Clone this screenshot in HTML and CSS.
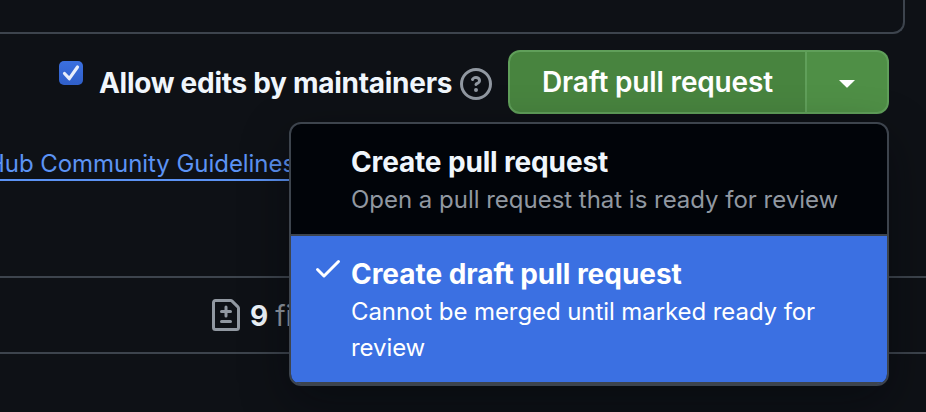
FILE: index.html
```html
<!DOCTYPE html>
<html lang="en">
<head>
<meta charset="utf-8">
<title>Draft pull request</title>
<link rel="stylesheet" href="styles.css">
</head>
<body>
<main class="page">
  <div class="editor"></div>
  <div class="actions">
    <label class="allow">
      <span class="checkbox">
        <svg width="24" height="24" viewBox="0 0 24 24"><path d="M5.5 12.5 10.3 17.7 18.5 6" fill="none" stroke="#e8eefb" stroke-width="3.2" stroke-linecap="round" stroke-linejoin="round"/></svg>
      </span>
      <span class="allow-text">Allow edits by maintainers</span>
    </label>
    <svg class="help" width="32" height="32" viewBox="0 0 16 16" fill="#9198a1"><path d="M0 8a8 8 0 1 1 16 0A8 8 0 0 1 0 8Zm8-6.5a6.5 6.5 0 1 0 0 13 6.5 6.5 0 0 0 0-13ZM6.92 6.085h.001a.749.749 0 1 1-1.342-.67c.169-.339.436-.701.849-.977C6.845 4.16 7.369 4 8 4a2.756 2.756 0 0 1 1.637.525c.503.377.863.965.863 1.725 0 .448-.115.83-.329 1.15-.205.307-.47.513-.692.662-.109.072-.22.138-.313.195l-.006.004a6.24 6.24 0 0 0-.26.16.952.952 0 0 0-.276.245.75.75 0 0 1-1.248-.832c.184-.264.42-.489.692-.661.103-.067.207-.132.313-.195l.007-.004c.1-.061.182-.11.258-.161a.969.969 0 0 0 .277-.245C8.96 6.514 9 6.427 9 6.25a.612.612 0 0 0-.262-.525A1.27 1.27 0 0 0 8 5.5c-.369 0-.595.09-.74.187a1.01 1.01 0 0 0-.34.398ZM9 11a1 1 0 1 1-2 0 1 1 0 0 1 2 0Z"/></svg>
    <div class="split">
      <button class="main-btn"><span>Draft pull request</span></button>
      <button class="caret-btn" aria-label="Select type">
        <svg width="16" height="8" viewBox="0 0 16 8"><path d="M0 0h16L8.7 7.3a1 1 0 0 1-1.4 0Z" fill="#fff"/></svg>
      </button>
      <div class="menu">
        <div class="item">
          <div class="title">Create pull request</div>
          <div class="desc">Open a pull request that is ready for review</div>
        </div>
        <div class="item selected">
          <svg class="tick" width="32" height="32" viewBox="0 0 16 16" fill="#fff"><path d="M13.78 4.22a.75.75 0 0 1 0 1.06l-7.25 7.25a.75.75 0 0 1-1.06 0L2.22 9.28a.751.751 0 0 1 .018-1.042.751.751 0 0 1 1.042-.018L6 10.94l6.72-6.72a.75.75 0 0 1 1.06 0Z"/></svg>
          <div class="title">Create draft pull request</div>
          <div class="desc">Cannot be merged until marked ready for review</div>
        </div>
      </div>
    </div>
  </div>
  <div class="notice"><a class="link">Hub Community Guidelines</a></div>
  <div class="stats">
    <svg width="32" height="32" viewBox="0 0 16 16" fill="#9198a1"><path d="M1 1.75C1 .784 1.784 0 2.75 0h7.586c.464 0 .909.184 1.237.513l2.914 2.914c.329.328.513.773.513 1.237v9.586A1.75 1.75 0 0 1 13.25 16H2.75A1.75 1.75 0 0 1 1 14.25Zm1.75-.25a.25.25 0 0 0-.25.25v12.5c0 .138.112.25.25.25h10.5a.25.25 0 0 0 .25-.25V4.664a.25.25 0 0 0-.073-.177l-2.914-2.914a.25.25 0 0 0-.177-.073ZM8 3.25a.75.75 0 0 1 .75.75v1.5h1.5a.75.75 0 0 1 0 1.5h-1.5v1.5a.75.75 0 0 1-1.5 0V7h-1.5a.75.75 0 0 1 0-1.5h1.5V4A.75.75 0 0 1 8 3.25Zm-3 8a.75.75 0 0 1 .75-.75h4.5a.75.75 0 0 1 0 1.5h-4.5a.75.75 0 0 1-.75-.75Z"/></svg>
    <strong>9</strong>
    <span class="files">files</span>
  </div>
</main>
</body>
</html>
```
FILE: styles.css
```css
* { box-sizing: border-box; }
body {
  margin: 0;
  background: #0e1116;
  color: #f0f6fc;
  font-family: Inter, "Liberation Sans", sans-serif;
  font-size: 28px;
}
.page { width: 926px; height: 412px; overflow: hidden; }
.editor {
  height: 34px;
  margin-right: 21px;
  border: solid #3d444d;
  border-width: 0 2px 2px 0;
  border-bottom-right-radius: 12px;
}
.actions {
  display: flex;
  justify-content: flex-end;
  height: 80px;
  padding: 16px 37px 0 0;
}
.allow {
  display: flex;
  width: 401px;
  font-weight: 650;
  line-height: 42px;
  white-space: nowrap;
}
.checkbox {
  width: 24px;
  height: 24px;
  margin: 11px 16px 0 0;
  border-radius: 5px;
  background: linear-gradient(#3b70df, #2f5fc9);
}
.checkbox svg, .help, .tick { display: block; }
.allow-text { padding-top: 12px; letter-spacing: -.28px; }
.help { margin: 18px 16px 0 0; }
.split { position: relative; display: flex; width: 381px; height: 64px; }
button {
  margin: 0;
  padding: 0;
  border: 2px solid #609f5a;
  background: #48843f;
  color: #fff;
  font: 600 28px/42px Inter, "Liberation Sans", sans-serif;
}
.main-btn {
  width: 299px;
  border-radius: 12px 0 0 12px;
  letter-spacing: -.16px;
}
.caret-btn {
  display: flex;
  align-items: center;
  justify-content: center;
  width: 82px;
  padding-top: 4px;
  border-left: 0;
  border-radius: 0 12px 12px 0;
  background: #4f8f46;
}
.menu {
  position: absolute;
  top: 72px;
  right: 0;
  width: 600px;
  height: 264px;
  border: 2px solid #3d444d;
  border-radius: 12px;
  overflow: hidden;
  background: #010409;
  box-shadow: 0 16px 48px rgba(1, 4, 9, .4);
}
.item {
  height: 112px;
  padding: 17px 48px 0 60px;
  border-bottom: 2px solid #3d444d;
}
.item.selected {
  position: relative;
  height: 148px;
  background: #3b70e2;
  color: #fff;
}
.tick { position: absolute; left: 21px; top: 16px; }
.title { font-weight: 650; line-height: 42px; letter-spacing: -.15px; }
.selected .title { letter-spacing: -.04px; }
.desc {
  margin-top: -1px;
  color: #9198a1;
  font-size: 24px;
  line-height: 36px;
  letter-spacing: -.02px;
}
.selected .desc { color: #fff; letter-spacing: -.08px; }
.notice { height: 162px; padding-top: 32px; }
.link {
  display: block;
  width: 302px;
  height: 35px;
  margin-left: -13px;
  border-bottom: 2px solid #5c93f4;
  color: #5c93f4;
  font-size: 24px;
  line-height: 35px;
  letter-spacing: -.05px;
  white-space: nowrap;
}
.stats {
  display: flex;
  align-items: center;
  gap: 8px;
  height: 78px;
  padding-left: 210px;
  border: solid #3d444d;
  border-width: 2px 0;
  color: #9198a1;
}
.stats strong, .files { padding-top: 2px; }
.stats strong { font-weight: 650; color: #f0f6fc; }
.files { margin-left: -1px; }
```
